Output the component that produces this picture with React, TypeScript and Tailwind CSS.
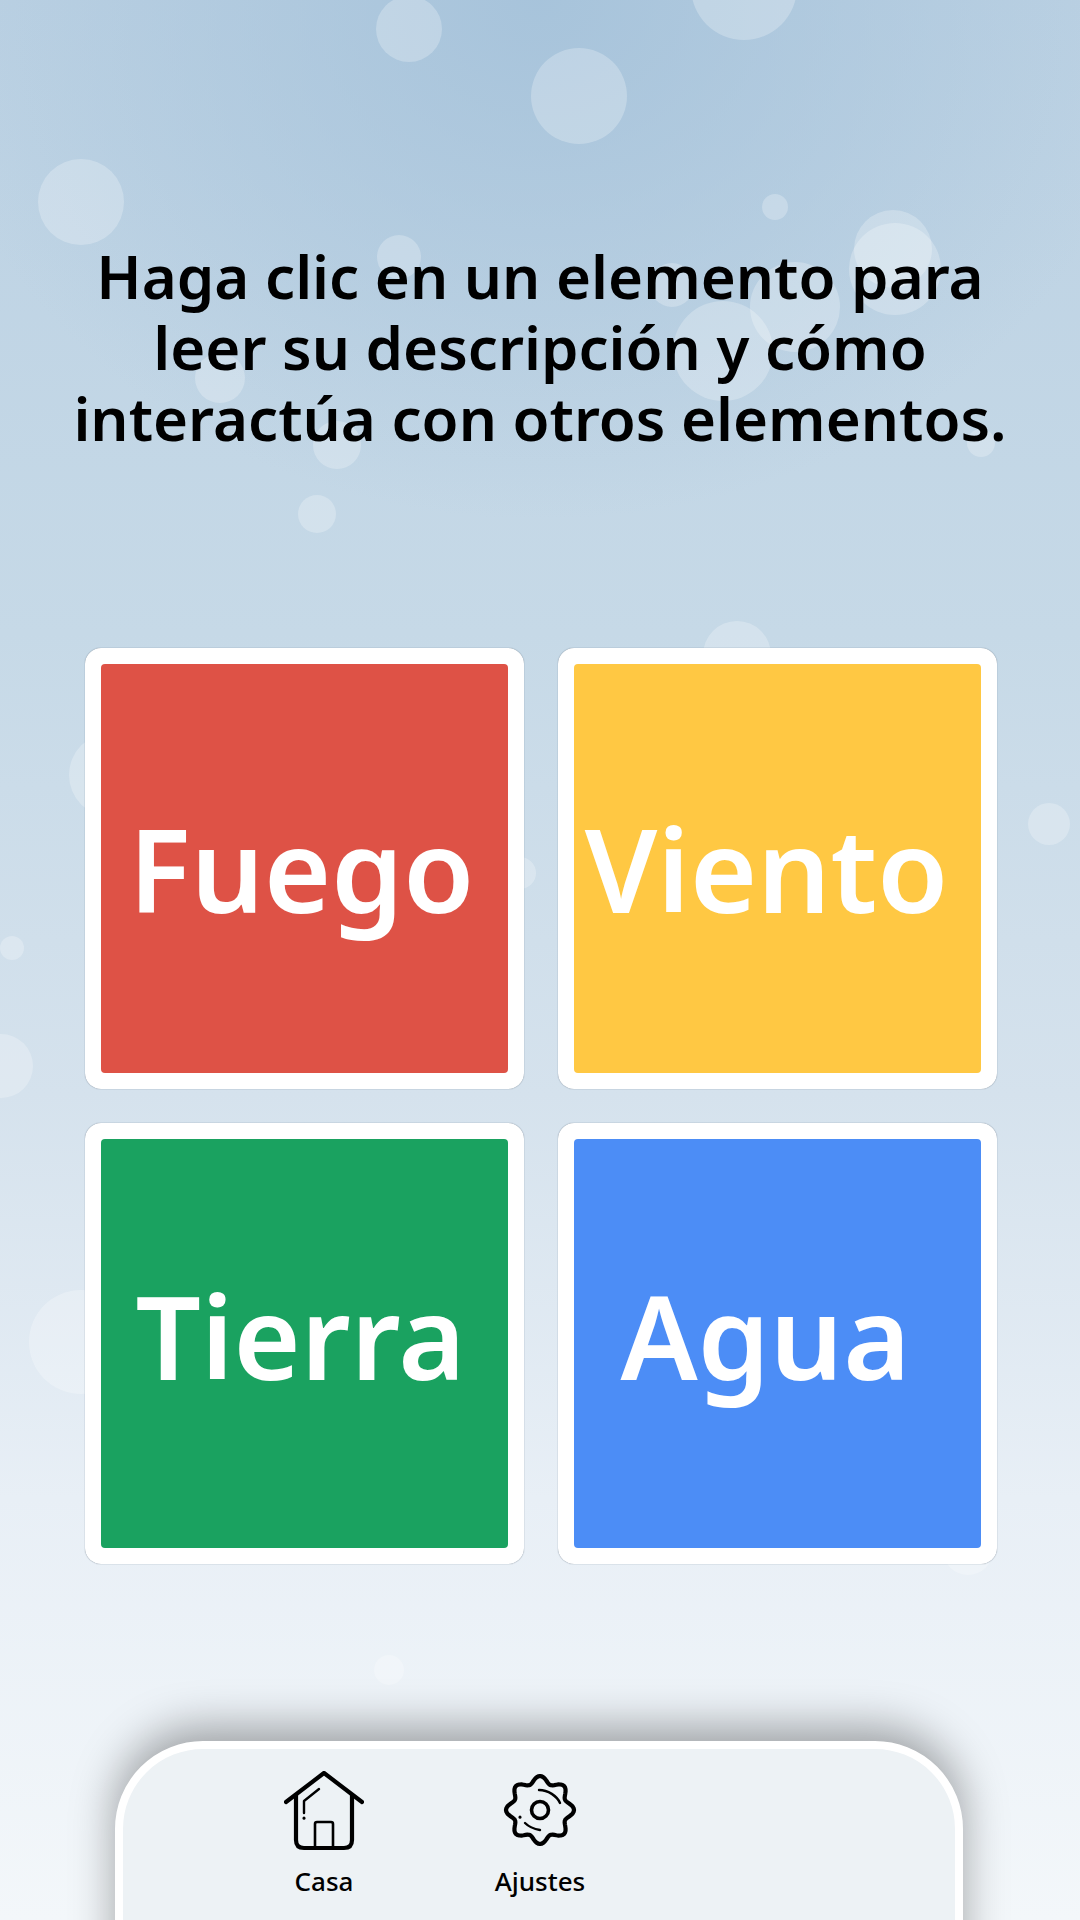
import React from 'react';

const bubbles = [
  { x: 409, y: 29, r: 33 },
  { x: 744, y: -13, r: 53 },
  { x: 579, y: 96, r: 48 },
  { x: 81, y: 202, r: 43 },
  { x: 775, y: 207, r: 13 },
  { x: 893, y: 249, r: 39 },
  { x: 895, y: 269, r: 46 },
  { x: 723, y: 351, r: 50 },
  { x: 795, y: 307, r: 45 },
  { x: 672, y: 285, r: 22 },
  { x: 399, y: 257, r: 22 },
  { x: 220, y: 378, r: 25 },
  { x: 337, y: 445, r: 24 },
  { x: 317, y: 514, r: 19 },
  { x: 981, y: 443, r: 14 },
  { x: 737, y: 655, r: 34 },
  { x: 1049, y: 824, r: 21 },
  { x: 12, y: 948, r: 12 },
  { x: 1, y: 1066, r: 32 },
  { x: 81, y: 1342, r: 52 },
  { x: 111, y: 775, r: 42 },
  { x: 520, y: 873, r: 16 },
  { x: 968, y: 1550, r: 25 },
  { x: 389, y: 1670, r: 15 },
];

// 8 rounded lobes round the gear
const gearPath =
  Array.from({ length: 120 }, (_, i) => {
    const a = (i * 3 * Math.PI) / 180;
    const r = 30.5 + 3.5 * Math.cos(8 * a);
    const px = (40 + r * Math.sin(a)).toFixed(2);
    const py = (40 - r * Math.cos(a)).toFixed(2);
    return `${i === 0 ? 'M' : 'L'}${px} ${py}`;
  }).join(' ') + ' Z';

function HouseIcon() {
  return (
    <svg viewBox="0 0 80 80" className="w-[80px] h-[80px]" fill="none" stroke="#000" strokeLinecap="round" strokeLinejoin="round">
      <path d="M2 31 L40 2 L78 31" strokeWidth="4.2" />
      <path d="M12 24 V69 Q12 77 20 77 H60 Q68 77 68 69 V24" strokeWidth="4.2" />
      <path d="M31 77 V53 Q31 51 33 51 H47 Q49 51 49 53 V77" strokeWidth="2.6" />
      <path d="M35 18 L20 30 V42" strokeWidth="2.4" />
      <path d="M20 47 V47.2" strokeWidth="3" />
    </svg>
  );
}

function GearIcon() {
  return (
    <svg viewBox="0 0 80 80" className="w-[80px] h-[80px] -mt-px" fill="none" stroke="#000" strokeLinecap="round" strokeLinejoin="round">
      <path d={gearPath} strokeWidth="4.2" />
      <circle cx="40" cy="40" r="8.5" strokeWidth="3.6" />
      <path d="M39 20 C48 20 57 26 60 33" strokeWidth="2.4" />
      <path d="M25 53 C29 57 34 59 40 60" strokeWidth="2.4" />
      <path d="M20 47 V47.2" strokeWidth="3" />
    </svg>
  );
}

function ElementCard({ label, color, offset }: { label: string; color: string; offset: string }) {
  return (
    <div className="w-[439px] h-[441px] bg-white rounded-2xl p-4 shadow-[0_0_1px_rgba(70,90,110,0.9)]">
      <div className={`w-full h-full rounded flex items-center justify-center ${color} ${offset}`}>
        <span className="text-white text-[115px] leading-none font-semibold">{label}</span>
      </div>
    </div>
  );
}

export default function App() {
  return (
    <div
      className="relative w-[1080px] h-[1920px] overflow-hidden flex flex-col items-center bg-[radial-gradient(ellipse_620px_520px_at_50%_0%,rgba(165,194,218,0.9)_0%,rgba(165,194,218,0)_100%),linear-gradient(180deg,#bbd1e3_0%,#c6d9e7_33%,#d5e2ed_57%,#e8eff6_78%,#f3f7fa_100%)]"
      style={{ fontFamily: '"Noto Sans", "Open Sans", sans-serif' }}
    >
      {bubbles.map((b, i) => (
        <div
          key={i}
          className="absolute rounded-full bg-white/25"
          style={{ left: b.x - b.r, top: b.y - b.r, width: b.r * 2, height: b.r * 2 }}
        />
      ))}

      <h1 className="relative mt-[241px] w-[1000px] text-center text-[60px] leading-[71px] font-semibold text-black">
        Haga clic en un elemento para
        <br />
        leer su descripción y cómo
        <br />
        interactúa con otros elementos.
      </h1>

      <div className="relative mt-[194px] ml-[2px] grid grid-cols-2 gap-x-[34px] gap-y-[34px]">
        <ElementCard label="Fuego" color="bg-[#de5246]" offset="pr-[6px]" />
        <ElementCard label="Viento" color="bg-[#ffc843]" offset="pr-[22px]" />
        <ElementCard label="Tierra" color="bg-[#1aa260]" offset="pr-[8px] pb-[16px]" />
        <ElementCard label="Agua" color="bg-[#4c8df6]" offset="pr-[24px] pb-[16px]" />
      </div>

      <div className="absolute left-[115px] top-[1741px] w-[848px] h-[260px] rounded-t-[88px] border-8 border-white bg-[#edf2f5] shadow-[0_-14px_44px_rgba(0,0,0,0.34)] pt-[22px] flex">
        <div className="ml-[161px] w-[80px] flex flex-col items-center">
          <HouseIcon />
          <span className="mt-[15px] text-[26px] leading-[30px] font-medium text-black whitespace-nowrap">Casa</span>
        </div>
        <div className="ml-[136px] w-[80px] flex flex-col items-center">
          <GearIcon />
          <span className="mt-[16px] text-[26px] leading-[30px] font-medium text-black whitespace-nowrap">Ajustes</span>
        </div>
      </div>
    </div>
  );
}
